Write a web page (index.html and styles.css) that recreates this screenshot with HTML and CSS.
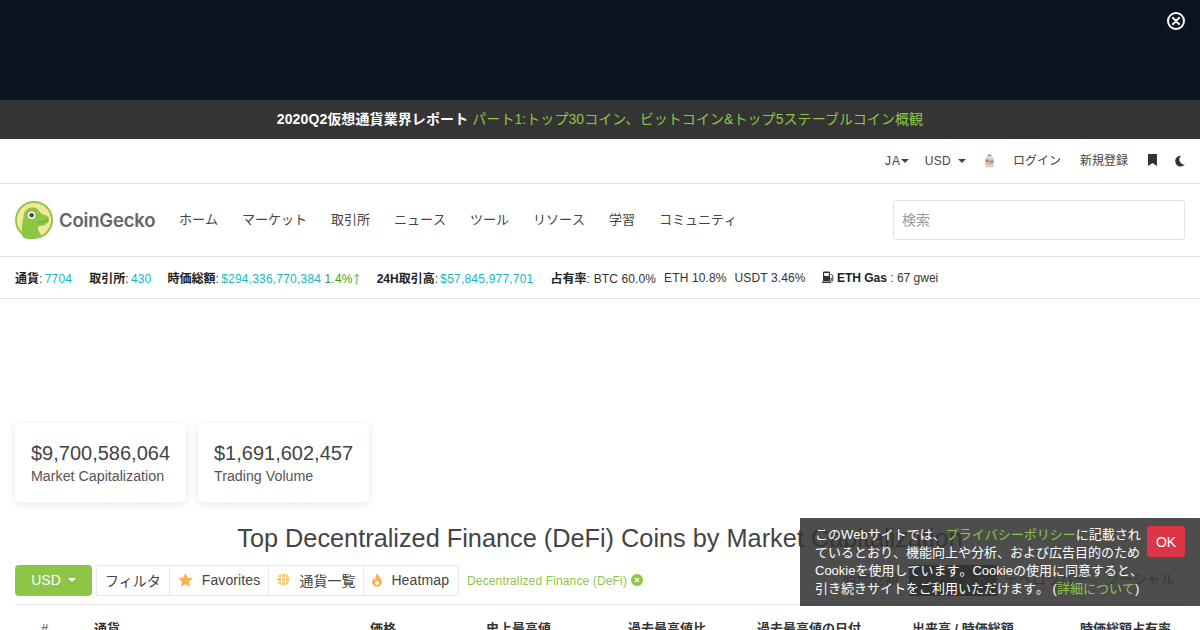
FILE: index.html
```html
<!DOCTYPE html>
<html lang="ja">
<head>
<meta charset="utf-8">
<title>CoinGecko</title>
<link rel="stylesheet" href="styles.css">
</head>
<body>
<div class="ad-top">
  <svg class="ad-close" viewBox="0 0 20 20" width="20" height="20"><circle cx="10" cy="10" r="8" fill="none" stroke="#fff" stroke-width="2"/><path d="M7 7l6 6M13 7l-6 6" stroke="#fff" stroke-width="2.2" stroke-linecap="round"/></svg>
</div>
<div class="promo"><b>2020Q2仮想通貨業界レポート</b> <span class="lime">パート1:トップ30コイン、ビットコイン&amp;トップ5ステーブルコイン概観</span></div>
<div class="utility">
  <span class="u-ja">JA<i class="caret"></i></span>
  <span class="u-usd">USD<i class="caret"></i></span>
  <svg class="candy" viewBox="0 0 12 16" width="11" height="15"><rect x="4" y="0.5" width="4" height="2" fill="#d9607c"/><rect x="2" y="2.5" width="8" height="2" fill="#f0d6dc"/><rect x="1" y="4.5" width="10" height="8" rx="1" fill="#c9d4c4"/><rect x="2" y="6" width="3" height="2.5" fill="#d9607c"/><rect x="6" y="7" width="4" height="2.5" fill="#6f9f8f"/><rect x="3" y="9.5" width="4" height="2" fill="#e3b95a"/><rect x="2" y="12.5" width="8" height="2" fill="#e5c8cf"/></svg>
  <span class="u-login">ログイン</span>
  <span class="u-signup">新規登録</span>
  <svg class="u-book" viewBox="0 0 9 12" width="9" height="12"><path d="M0 0h9v12L4.500 9 0 12z" fill="#333"/></svg>
  <svg class="u-moon" viewBox="0 0 12 12" width="11" height="12"><path d="M7.600 0.200A5.900 5.900 0 1 0 11.800 9.800 5.600 5.600 0 0 1 7.600 0.200z" fill="#333"/></svg>
</div>
<header class="mainnav">
  <div class="logo">
    <svg viewBox="0 0 40 40" width="38" height="38"><circle cx="20" cy="20" r="20" fill="#8dc647"/><circle cx="20" cy="20" r="18" fill="#f4e79a"/><path d="M8 38C6 30 8 22 9 17 9 11 13 6.500 19 6.500c4 0 6 3 8 6 2 2 6 2.500 8 4 2 3 0 7-3 8.500-2 1-5 1.500-7.500 1.500-1 3 1 7 3.500 10-6 4-15 5-20 1.500z" fill="#8dc647"/><path d="M24 22c4 1 8 0 11-3" stroke="#5f9e2f" stroke-width="1" fill="none"/><circle cx="17.500" cy="15" r="4" fill="#fff"/><circle cx="17.500" cy="15" r="2.400" fill="#4a4a3a"/></svg>
    <span class="logo-text">CoinGecko</span>
  </div>
  <nav class="menu">
    <a>ホーム</a><a>マーケット</a><a>取引所</a><a>ニュース</a><a>ツール</a><a>リソース</a><a>学習</a><a>コミュニティ</a>
  </nav>
  <div class="search">検索</div>
</header>
<div class="stats">
  <span class="s1"><b>通貨</b>: <em>7704</em></span>
  <span class="s2"><b>取引所</b>: <em>430</em></span>
  <span class="s3"><b>時価総額</b>: <em>$294,336,770,384</em> <u>1.4%</u><svg class="up" viewBox="0 0 8 12" width="7" height="12"><path d="M4.500 11.500V1M1.500 3.500L4.500 0.800M4.500 0.800L7 3M3 11.500H4.500" stroke="#4a9a1a" stroke-width="1" fill="none"/></svg></span>
  <span class="s4"><b>24H取引高</b>: <em>$57,845,977,701</em></span>
  <span class="s5"><b>占有率</b>: <span class="n btc">BTC 60.0%</span></span>
  <span class="s6 n">ETH 10.8%</span>
  <span class="s7 n">USDT 3.46%</span>
  <span class="s8"><svg viewBox="0 0 12 12" width="12" height="12"><path d="M1 1.500a1 1 0 0 1 1-1h5a1 1 0 0 1 1 1V10H1zM2.200 2v3h4.600V2zM0 10.500h9V12H0z" fill="#333" fill-rule="evenodd"/><path d="M8.500 3l2.300 1.800v4.700a.8.800 0 0 1-1.600 0V7H8.500" stroke="#333" fill="none"/></svg> <b>ETH Gas</b> <span>: 67 gwei</span></span>
</div>
<div class="cards">
  <div class="card"><div class="big">$9,700,586,064</div><div class="small">Market Capitalization</div></div>
  <div class="card"><div class="big">$1,691,602,457</div><div class="small">Trading Volume</div></div>
</div>
<h1 class="title">Top Decentralized Finance (DeFi) Coins by Market Capitalization</h1>
<div class="toolbar">
  <button class="usd">USD<i class="caret white"></i></button>
  <div class="group">
    <a>フィルタ</a>
    <a><svg viewBox="0 0 16 15" width="15" height="14"><path d="M8 0l2.300 5 5.500.6-4.100 3.700 1.200 5.400L8 12l-4.900 2.700 1.200-5.400L.2 5.600 5.700 5z" fill="#f6b352"/></svg><span class="fav">Favorites</span></a>
    <a><svg viewBox="0 0 14 14" width="13" height="13"><circle cx="7" cy="7" r="6.500" fill="#f6c26b"/><path d="M0 5h14M0 9h14M5 0v14M9 0v14" stroke="#fff" stroke-width="1"/></svg>通貨一覧</a>
    <a><svg viewBox="0 0 10 14" width="10" height="14"><path d="M5 0c1 3 5 5 5 9a5 5 0 0 1-10 0c0-2 1-3 2-4 0 1 .5 2 1 2C3.500 5 4 2 5 0z" fill="#f6b352"/><circle cx="5" cy="10" r="2" fill="#fff"/></svg><span class="fav">Heatmap</span></a>
  </div>
  <span class="tag">Decentralized Finance (DeFi) <svg viewBox="0 0 12 12" width="12" height="12"><circle cx="6" cy="6" r="6" fill="#8dc647"/><path d="M4 4l4 4M8 4l-4 4" stroke="#fff" stroke-width="1.500"/></svg></span>
  <div class="tabs">
    <a class="t1">時価総額</a><a class="active">マーケット</a><a class="t3">デベロッパー</a><a class="t4">ソーシャル</a>
  </div>
</div>
<table class="coins">
  <thead><tr><th class="c1">#</th><th class="c2">通貨</th><th class="c3">価格</th><th class="c4">史上最高値</th><th class="c5">過去最高値比</th><th class="c6">過去最高値の日付</th><th class="c7">出来高 / 時価総額</th><th class="c8">時価総額占有率</th></tr></thead>
</table>
<div class="cookie">
  <p>このWebサイトでは、<a>プライバシーポリシー</a>に記載されているとおり、機能向上や分析、および広告目的のためCookieを使用しています。Cookieの使用に同意すると、引き続きサイトをご利用いただけます。 (<a>詳細について</a>)</p>
  <button>OK</button>
</div>
</body>
</html>
```
FILE: styles.css
```css
* { box-sizing: border-box; }
html, body { margin: 0; padding: 0; height: 630px; overflow: hidden; }
body { background: #fff; color: #333; font-family: "Liberation Sans", "Noto Sans CJK JP", sans-serif; position: relative; }
a { text-decoration: none; }
.ad-top { height: 100px; background: #0b1422; position: relative; }
.ad-close { position: absolute; top: 11px; right: 14px; }
.promo { height: 39px; background: #343434; color: #fff; font-size: 14px; display: flex; align-items: center; justify-content: center; gap: 4px; padding-bottom: 4px; }
.promo b { letter-spacing: .1px; }
.lime { color: #8dc647; letter-spacing: .07px; }
.utility { height: 45px; border-bottom: 1px solid #dee2e6; display: flex; align-items: center; justify-content: flex-end; font-size: 12px; color: #444; padding-right: 15px; }
.caret { display: inline-block; border-top: 4px solid currentColor; border-left: 4px solid transparent; border-right: 4px solid transparent; vertical-align: 2px; margin-left: 0; }
.u-ja { letter-spacing: .8px; }
.u-usd { margin-left: 16px; letter-spacing: .3px; }
.u-usd .caret { margin-left: 7px; }
.candy { margin-left: 18px; }
.u-login { margin-left: 18px; margin-bottom: 3px; }
.u-signup { margin-left: 19px; margin-bottom: 3px; }
.u-book { margin-left: 20px; margin-bottom: 2px; }
.u-moon { margin-left: 17px; margin-bottom: 1px; }
.mainnav { height: 73px; display: flex; align-items: center; padding: 0 15px; border-bottom: 1px solid #dee2e6; }
.logo { display: flex; align-items: center; gap: 6px; width: 164px; flex: none; }
.logo-text { font-family: "Inter", sans-serif; font-size: 18.5px; font-weight: 600; color: #666; letter-spacing: -0.2px; }
.menu { display: flex; gap: 24px; font-size: 13px; color: #444; flex: 1; padding-bottom: 3px; font-kerning: none; }
.search { width: 292px; height: 40px; border: 1px solid #dfe3e7; border-radius: 3px; color: #999; font-size: 14px; display: flex; align-items: center; padding: 0 0 2px 8px; }
.stats { height: 42px; border-bottom: 1px solid #dee2e6; display: flex; align-items: center; padding-left: 15px; font-size: 12px; color: #333; white-space: nowrap; }
.stats b { font-weight: 700; color: #222; }
.stats em { font-style: normal; color: #17b5c2; letter-spacing: .2px; margin-left: -1px; }
.stats u { text-decoration: none; color: #4a9a1a; letter-spacing: .2px; }
.stats .n { letter-spacing: .12px; }
.stats .btc { margin-left: .5px; }
.s2 { margin-left: 17px; }
.s3 { margin-left: 16px; }
.up { vertical-align: -2px; }
.s4 { margin-left: 17px; }
.s5 { margin-left: 17px; }
.s6, .s7 { margin-left: 8px; }
.s8 { margin-left: 16px; }
.s8 svg { vertical-align: -1px; }
.cards { display: flex; gap: 12px; padding: 124px 15px 0; }
.card { width: 171px; height: 79px; border-radius: 4px; box-shadow: 0 2px 8px rgba(0,0,0,.1); padding: 17px 16px; }
.big { font-size: 20px; line-height: 26px; color: #444; white-space: nowrap; }
.small { font-size: 14.25px; line-height: 20px; color: #555; white-space: nowrap; }
.title { margin: 19px 0 0; font-size: 25.3px; line-height: 34px; font-weight: 400; color: #444; text-align: center; white-space: nowrap; }
.toolbar { margin: 10px 15px 0; height: 40px; padding-bottom: 8px; border-bottom: 1px solid #dee2e6; display: flex; align-items: flex-start; font-size: 14px; }
.usd { width: 77px; height: 31px; background: #8dc647; color: #fff; border: 0; border-radius: 4px; font: 14px "Liberation Sans", sans-serif; padding: 0 0 2px 0; }
.usd .caret { margin-left: 7px; vertical-align: 3px; }
.group { display: flex; margin-left: 4px; height: 31px; border: 1px solid #e6e9ec; border-radius: 2px; padding-right: 1px; }
.group a { display: flex; align-items: center; gap: 9px; padding: 0 8px 2px; color: #444; font-size: 14px; border-left: 1px solid #e6e9ec; white-space: nowrap; }
.group a:first-child { border-left: 0; }
.fav { letter-spacing: .12px; }
.tag { margin-left: 8px; color: #8dc647; font-size: 12px; line-height: 32px; white-space: nowrap; letter-spacing: .14px; }
.tag svg { vertical-align: -1px; }
.tabs { margin-left: auto; display: flex; height: 31px; align-items: center; font-size: 14px; color: #555; white-space: nowrap; }
.tabs a { height: 31px; line-height: 28px; text-align: center; }
.t1 { width: 76px; }
.tabs .active { background: #343a40; color: #6a6a6a; width: 88px; }
.t3 { width: 98px; }
.t4 { width: 90px; }
.coins { margin: 14px 15px 0; border-collapse: collapse; font-size: 13px; color: #333; table-layout: fixed; width: 1170px; }
.coins th { text-align: left; padding: 0; font-weight: 700; line-height: 20px; white-space: nowrap; }
.c1 { width: 79px; padding-left: 26px !important; font-weight: 400 !important; }
.c2 { width: 276px; }
.c3 { width: 116px; }
.c4 { width: 142px; }
.c5 { width: 129px; }
.c6 { width: 155px; }
.c7 { width: 168px; }
.cookie { position: absolute; left: 800px; right: 0; top: 518px; height: 88px; background: rgba(51,51,51,.87); color: #fff; display: flex; padding: 8px 15px; gap: 3px; }
.cookie p { margin: 0; font-size: 13px; line-height: 18px; width: 329px; flex: none; padding-top: 0; font-kerning: none; }
.cookie a { color: #8dc647; }
.cookie button { width: 38px; height: 31px; background: #dc3545; color: #fff; border: 0; border-radius: 3px; font: 14px "Liberation Sans", sans-serif; padding: 0; }
```
